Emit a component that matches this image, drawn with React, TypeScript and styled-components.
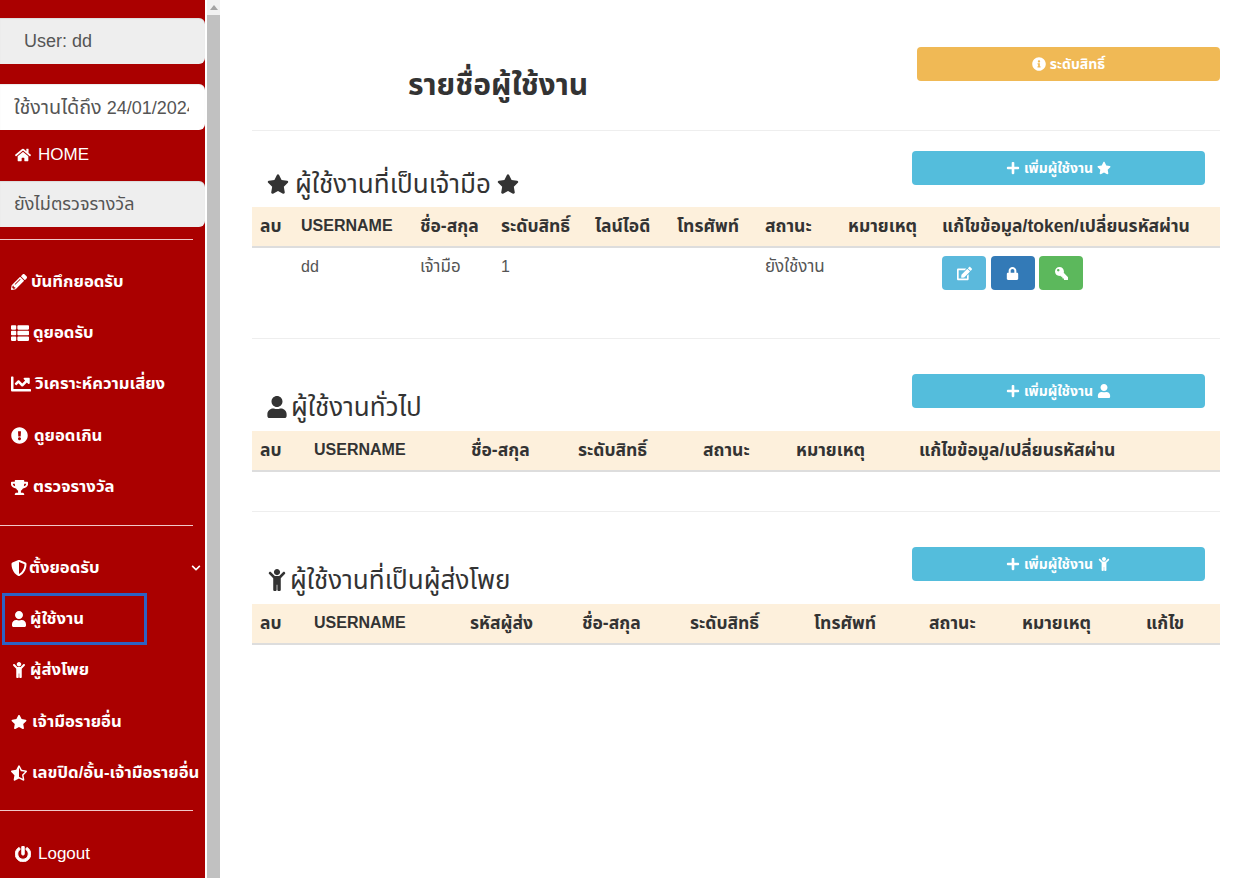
import React from "react";
import styled, { createGlobalStyle } from "styled-components";
import {
  FaChartLine,
  FaChevronDown,
  FaChild,
  FaEdit,
  FaExclamationCircle,
  FaHome,
  FaInfoCircle,
  FaKey,
  FaLock,
  FaPencilAlt,
  FaPlus,
  FaPowerOff,
  FaShieldAlt,
  FaStar,
  FaStarHalfAlt,
  FaThList,
  FaTrophy,
  FaUser,
} from "react-icons/fa";

const GlobalStyle = createGlobalStyle`
  html, body {
    margin: 0;
    height: 100%;
    overflow: hidden;
    background: #fff;
    font-family: "Liberation Sans", "Noto Sans Thai", "DejaVu Sans", sans-serif;
    font-size: 14px;
    color: #333;
  }
`;

const Page = styled.div`
  display: flex;
  height: 878px;
`;

const Sidebar = styled.aside`
  width: 205px;
  flex: none;
  padding-top: 18px;
  background: #aa0000;
  color: #fff;
  box-sizing: border-box;
`;

const InfoBox = styled.div<{ $white?: boolean; $indent?: number; $top?: number }>`
  height: 46px;
  margin-top: ${(p) => p.$top ?? 0}px;
  padding: 0 16px 0 ${(p) => p.$indent ?? 14}px;
  box-sizing: border-box;
  overflow: hidden;
  white-space: nowrap;
  line-height: 46px;
  border-radius: 0 6px 6px 0;
  background: ${(p) => (p.$white ? "#fff" : "#eee")};
  color: #555;
  font-size: 18px;
  box-shadow: inset 0 1px 1px rgba(0, 0, 0, 0.08);
`;

const BoxText = styled.div`
  overflow: hidden;
`;

const DateLabel = styled.span`
  font-size: 19.8px;
`;

const PlainLink = styled.div<{ $height: number }>`
  height: ${(p) => p.$height}px;
  padding-left: 15px;
  display: flex;
  align-items: center;
  gap: 7px;
  font-size: 17px;
  svg {
    font-size: 16px;
  }
`;

const Divider = styled.hr<{ $top: number; $bottom: number }>`
  width: 193px;
  height: 1px;
  margin: ${(p) => p.$top}px 0 ${(p) => p.$bottom}px;
  border: 0;
  background: #f0c8c8;
`;

const MenuItem = styled.div<{ $active?: boolean; $gap: number }>`
  position: relative;
  height: 51.4px;
  padding-left: 11px;
  display: flex;
  align-items: center;
  gap: ${(p) => p.$gap}px;
  box-sizing: border-box;
  font-size: 16.7px;
  font-weight: bold;
  white-space: nowrap;
  svg {
    flex: none;
    font-size: 16px;
  }
  ${(p) =>
    p.$active &&
    `&::after {
      content: "";
      position: absolute;
      left: 2px;
      top: 0;
      width: 145px;
      height: 52px;
      box-sizing: border-box;
      border: 3px solid #2d62c4;
    }`}
`;

const Caret = styled.span`
  margin-left: auto;
  margin-right: 4px;
  display: flex;
  svg {
    font-size: 10px;
  }
`;

const Scrollbar = styled.div`
  width: 15px;
  flex: none;
  display: flex;
  flex-direction: column;
  box-sizing: border-box;
  border-left: 2px solid #fff;
  background: #f1f1f1;
`;

const ScrollArrow = styled.div`
  height: 15px;
  flex: none;
  display: flex;
  align-items: center;
  justify-content: center;
  &::before {
    content: "";
    border-left: 4px solid transparent;
    border-right: 4px solid transparent;
    border-bottom: 5px solid #a3a3a3;
  }
`;

const ScrollThumb = styled.div`
  flex: 1;
  background: #c1c1c1;
`;

const Main = styled.main`
  flex: 1;
  min-width: 0;
  padding: 0 16px 0 32px;
`;

const TopBar = styled.header`
  height: 83px;
  padding: 47px 0 0 156px;
  display: flex;
  justify-content: space-between;
  border-bottom: 1px solid #eee;
`;

const PageTitle = styled.h1`
  margin: 20px 0 0;
  font-size: 30px;
  line-height: 36px;
  font-weight: bold;
  color: #333;
`;

const ActionButton = styled.button<{ $tone: string; $width: number }>`
  width: ${(p) => p.$width}px;
  height: 34px;
  padding: 0;
  display: flex;
  align-items: center;
  justify-content: center;
  gap: 4px;
  border: 0;
  border-radius: 4px;
  background: ${(p) => p.$tone};
  color: #fff;
  font-family: inherit;
  font-size: 14px;
  font-weight: bold;
  svg {
    font-size: 14px;
  }
`;

const Section = styled.section`
  border-bottom: 1px solid #eee;
  &:last-child {
    border-bottom: 0;
  }
`;

const SectionHead = styled.div<{ $height: number; $lift?: number }>`
  height: ${(p) => p.$height}px;
  padding-bottom: ${(p) => p.$lift ?? 0}px;
  box-sizing: border-box;
  display: flex;
  justify-content: space-between;
  align-items: flex-end;
`;

const SectionTitle = styled.h3<{ $indent: number; $gap: number }>`
  margin: 0 0 6px ${(p) => p.$indent}px;
  display: flex;
  align-items: center;
  gap: ${(p) => p.$gap}px;
  font-size: 26px;
  line-height: 34px;
  font-weight: normal;
  color: #333;
  svg {
    font-size: 22px;
  }
`;

const AddSlot = styled.div`
  margin: 0 15px 22px 0;
`;

const Table = styled.table<{ $gap: number }>`
  width: 100%;
  margin-bottom: ${(p) => p.$gap}px;
  border-collapse: collapse;
  table-layout: fixed;
`;

const HeadCell = styled.th<{ $latin?: boolean }>`
  height: 40px;
  padding: 0 0 1px 8px;
  box-sizing: border-box;
  border-bottom: 2px solid #ddd;
  background: #fdf0dc;
  text-align: left;
  font-size: ${(p) => (p.$latin ? 16 : 17.5)}px;
  font-weight: bold;
  white-space: nowrap;
  color: #333;
`;

const Cell = styled.td<{ $latin?: boolean }>`
  padding: 8px 0 8px 8px;
  vertical-align: top;
  line-height: 22px;
  font-size: ${(p) => (p.$latin ? 16 : 17)}px;
  white-space: nowrap;
  color: #555;
`;

const CellButtons = styled.div`
  display: flex;
  gap: 4.5px;
`;

const RowButton = styled.button<{ $tone: string }>`
  width: 44px;
  height: 34px;
  padding: 0;
  border: 0;
  border-radius: 4px;
  background: ${(p) => p.$tone};
  color: #fff;
  display: flex;
  align-items: center;
  justify-content: center;
  svg {
    font-size: 14px;
  }
`;

const MirroredKey = styled(FaKey)`
  transform: scaleX(-1);
`;

type Head = { label: string; width: number };

const hostColumns: Head[] = [
  { label: "ลบ", width: 41 },
  { label: "USERNAME", width: 119 },
  { label: "ชื่อ-สกุล", width: 81 },
  { label: "ระดับสิทธิ์", width: 94 },
  { label: "ไลน์ไอดี", width: 82 },
  { label: "โทรศัพท์", width: 88 },
  { label: "สถานะ", width: 83 },
  { label: "หมายเหตุ", width: 94 },
  { label: "แก้ไขข้อมูล/token/เปลี่ยนรหัสผ่าน", width: 286 },
];

const memberColumns: Head[] = [
  { label: "ลบ", width: 54 },
  { label: "USERNAME", width: 157 },
  { label: "ชื่อ-สกุล", width: 107 },
  { label: "ระดับสิทธิ์", width: 125 },
  { label: "สถานะ", width: 93 },
  { label: "หมายเหตุ", width: 123 },
  { label: "แก้ไขข้อมูล/เปลี่ยนรหัสผ่าน", width: 309 },
];

const senderColumns: Head[] = [
  { label: "ลบ", width: 54 },
  { label: "USERNAME", width: 156 },
  { label: "รหัสผู้ส่ง", width: 112 },
  { label: "ชื่อ-สกุล", width: 108 },
  { label: "ระดับสิทธิ์", width: 124 },
  { label: "โทรศัพท์", width: 115 },
  { label: "สถานะ", width: 93 },
  { label: "หมายเหตุ", width: 124 },
  { label: "แก้ไข", width: 82 },
];

const UserTable = ({
  columns,
  gap = 40,
  children,
}: {
  columns: Head[];
  gap?: number;
  children?: React.ReactNode;
}) => (
  <Table $gap={gap}>
    <colgroup>
      {columns.map((c) => (
        <col key={c.label} width={c.width} />
      ))}
    </colgroup>
    <thead>
      <tr>
        {columns.map((c) => (
          <HeadCell key={c.label} $latin={c.label === "USERNAME"}>
            {c.label}
          </HeadCell>
        ))}
      </tr>
    </thead>
    {children && <tbody>{children}</tbody>}
  </Table>
);

const INFO = "#54bddc";

export default function App() {
  return (
    <Page>
      <GlobalStyle />
      <Sidebar>
        <InfoBox $indent={24}>User: dd</InfoBox>
        <InfoBox $white $top={20}>
          <BoxText><DateLabel>ใช้งานได้ถึง</DateLabel> 24/01/2024</BoxText>
        </InfoBox>
        <PlainLink $height={50}>
          <FaHome /> HOME
        </PlainLink>
        <InfoBox $top={1}>ยังไม่ตรวจรางวัล</InfoBox>
        <Divider $top={12} $bottom={16} />
        <MenuItem $gap={4}><FaPencilAlt /> บันทึกยอดรับ</MenuItem>
        <MenuItem $gap={4}><FaThList size={18} /> ดูยอดรับ</MenuItem>
        <MenuItem $gap={4}><FaChartLine size={20} /> วิเคราะห์ความเสี่ยง</MenuItem>
        <MenuItem $gap={6}><FaExclamationCircle size={17} /> ดูยอดเกิน</MenuItem>
        <MenuItem $gap={5}><FaTrophy size={17} /> ตรวจรางวัล</MenuItem>
        <Divider $top={12} $bottom={16} />
        <MenuItem $gap={2}>
          <FaShieldAlt /> ตั้งยอดรับ
          <Caret><FaChevronDown /></Caret>
        </MenuItem>
        <MenuItem $active $gap={3}><FaUser /> ผู้ใช้งาน</MenuItem>
        <MenuItem $gap={3}><FaChild /> ผู้ส่งโพย</MenuItem>
        <MenuItem $gap={5}><FaStar /> เจ้ามือรายอื่น</MenuItem>
        <MenuItem $gap={5}><FaStarHalfAlt /> เลขปิด/อั้น-เจ้ามือรายอื่น</MenuItem>
        <Divider $top={11} $bottom={17} />
        <PlainLink $height={52}>
          <FaPowerOff strokeWidth={30} /> Logout
        </PlainLink>
      </Sidebar>

      <Scrollbar>
        <ScrollArrow />
        <ScrollThumb />
      </Scrollbar>

      <Main>
        <TopBar>
          <PageTitle>รายชื่อผู้ใช้งาน</PageTitle>
          <ActionButton $tone="#f0b955" $width={303}>
            <FaInfoCircle /> ระดับสิทธิ์
          </ActionButton>
        </TopBar>

        <Section>
          <SectionHead $height={76}>
            <SectionTitle $indent={15} $gap={6}>
              <FaStar /> ผู้ใช้งานที่เป็นเจ้ามือ <FaStar />
            </SectionTitle>
            <AddSlot>
              <ActionButton $tone={INFO} $width={293}>
                <FaPlus /> เพิ่มผู้ใช้งาน <FaStar />
              </ActionButton>
            </AddSlot>
          </SectionHead>
          <UserTable columns={hostColumns}>
            <tr>
              <Cell />
              <Cell $latin>dd</Cell>
              <Cell>เจ้ามือ</Cell>
              <Cell $latin>1</Cell>
              <Cell />
              <Cell />
              <Cell>ยังใช้งาน</Cell>
              <Cell />
              <Cell>
                <CellButtons>
                  <RowButton $tone="#5bb9dc"><FaEdit size={15} /></RowButton>
                  <RowButton $tone="#337ab7"><FaLock size={13} /></RowButton>
                  <RowButton $tone="#5cb85c"><MirroredKey size={13} /></RowButton>
                </CellButtons>
              </Cell>
            </tr>
          </UserTable>
        </Section>

        <Section>
          <SectionHead $height={92} $lift={1}>
            <SectionTitle $indent={14} $gap={3}>
              <FaUser /> ผู้ใช้งานทั่วไป
            </SectionTitle>
            <AddSlot>
              <ActionButton $tone={INFO} $width={293}>
                <FaPlus /> เพิ่มผู้ใช้งาน <FaUser />
              </ActionButton>
            </AddSlot>
          </SectionHead>
          <UserTable columns={memberColumns} gap={39} />
        </Section>

        <Section>
          <SectionHead $height={92} $lift={1}>
            <SectionTitle $indent={14} $gap={2}>
              <FaChild /> ผู้ใช้งานที่เป็นผู้ส่งโพย
            </SectionTitle>
            <AddSlot>
              <ActionButton $tone={INFO} $width={293}>
                <FaPlus /> เพิ่มผู้ใช้งาน <FaChild />
              </ActionButton>
            </AddSlot>
          </SectionHead>
          <UserTable columns={senderColumns} />
        </Section>
      </Main>
    </Page>
  );
}
